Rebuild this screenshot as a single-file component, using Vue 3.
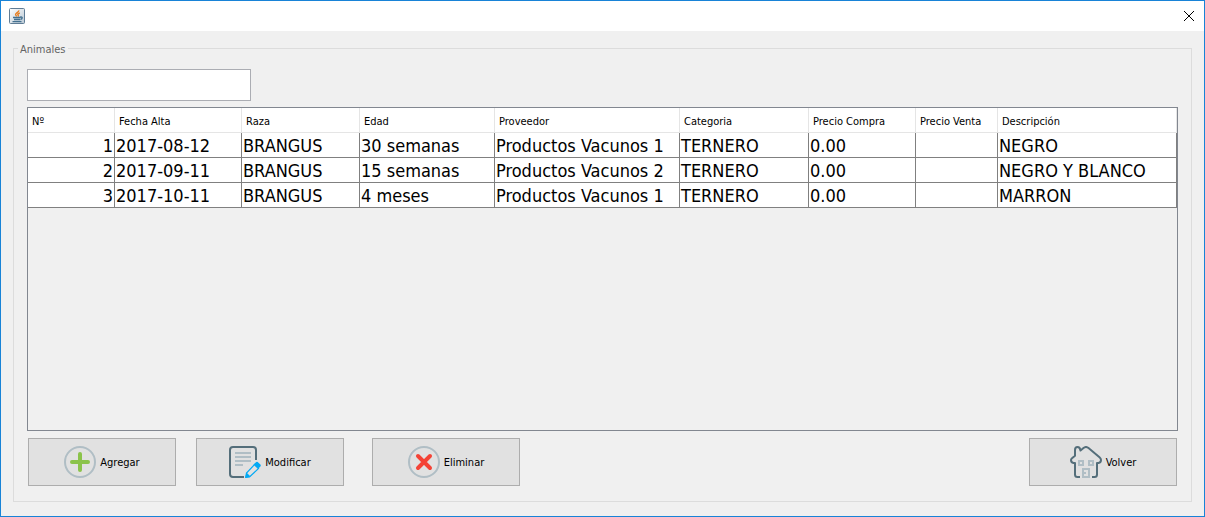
<script setup>
import { ref } from 'vue'

const search = ref('')
const columns = [
  { key: 'n', label: 'Nº' },
  { key: 'date', label: 'Fecha Alta' },
  { key: 'breed', label: 'Raza' },
  { key: 'age', label: 'Edad' },
  { key: 'supplier', label: 'Proveedor' },
  { key: 'category', label: 'Categoria' },
  { key: 'buy', label: 'Precio Compra' },
  { key: 'sell', label: 'Precio Venta' },
  { key: 'description', label: 'Descripción' }
]
const rows = [
  { n: 1, date: '2017-08-12', breed: 'BRANGUS', age: '30 semanas', supplier: 'Productos Vacunos 1', category: 'TERNERO', buy: '0.00', sell: '', description: 'NEGRO' },
  { n: 2, date: '2017-09-11', breed: 'BRANGUS', age: '15 semanas', supplier: 'Productos Vacunos 2', category: 'TERNERO', buy: '0.00', sell: '', description: 'NEGRO Y BLANCO' },
  { n: 3, date: '2017-10-11', breed: 'BRANGUS', age: '4 meses', supplier: 'Productos Vacunos 1', category: 'TERNERO', buy: '0.00', sell: '', description: 'MARRON' }
]
</script>

<template>
  <div class="window">
    <header class="titlebar">
      <svg class="app-icon" width="16" height="16" viewBox="0 0 16 16" aria-hidden="true">
        <defs>
          <linearGradient id="tile" x1="0" y1="0" x2="1" y2="1">
            <stop offset="0" stop-color="#ffffff" />
            <stop offset="1" stop-color="#b9c8d4" />
          </linearGradient>
        </defs>
        <rect x=".5" y=".5" width="15" height="15" rx="1" fill="url(#tile)" stroke="#5f7c95" />
        <path d="M9.8 2.4C10 4.4 6.2 4.8 6.600 6.600c.1.6.7 1.200 1.200 1.800M10.800 5C8.400 5.700 8.500 6.500 9.200 7.200c.4.5.1.9-.3 1.300" fill="none" stroke="#e87d1e" stroke-width="1.400" />
        <path d="M4 9.500h7M5 11.500h6M11 9.200c3-.8 2.700 1.700.4 2.300M3.500 13.600h9" fill="none" stroke="#44708f" stroke-width="1.400" />
      </svg>
      <button class="close" type="button" aria-label="Cerrar">
        <svg width="12" height="12" viewBox="0 0 12 12" aria-hidden="true">
          <path d="M1 1l10 10M11 1L1 11" fill="none" stroke="#000" stroke-width="1" />
        </svg>
      </button>
    </header>
    <main class="body">
      <fieldset class="group">
        <legend>Animales</legend>
        <input v-model="search" class="search" type="text" aria-label="Buscar" />
        <div class="pane">
          <table>
            <colgroup>
              <col v-for="c in columns" :key="c.key" :class="'col-' + c.key" />
            </colgroup>
            <thead>
              <tr>
                <th v-for="c in columns" :key="c.key" scope="col">{{ c.label }}</th>
              </tr>
            </thead>
            <tbody>
              <tr v-for="r in rows" :key="r.n">
                <td v-for="c in columns" :key="c.key" :class="{ number: c.key === 'n' }">{{ r[c.key] }}</td>
              </tr>
            </tbody>
          </table>
        </div>
        <div class="actions">
          <button class="action" type="button">
            <svg width="32" height="32" viewBox="0 0 32 32" aria-hidden="true">
              <circle cx="16" cy="16" r="15" fill="none" stroke="#b0bec5" stroke-width="2" />
              <path d="M16 8v16M8 16h16" fill="none" stroke="#8bc34a" stroke-width="4" stroke-linecap="round" />
            </svg>
            <span>Agregar</span>
          </button>
          <button class="action" type="button">
            <svg width="32" height="32" viewBox="0 0 32 32" aria-hidden="true">
              <path d="M27 14V4q0-3-3-3H4Q1 1 1 4v24q0 3 3 3h11" fill="none" stroke="#546e7a" stroke-width="2" />
              <path d="M6 7h16M6 11h16M6 15h16M6 19h8" fill="none" stroke="#b0bec5" stroke-width="2" />
              <path d="M25.500 18.500l4 4-9 8.500-3.700.4.700-4.400z" fill="#e1e1e1" stroke="#03a9f4" stroke-width="1.200" />
              <path d="M24.500 18.500l2.200-2.100q1-.9 2-.4l2.700 2.600q.8 1 0 2l-2.200 2.200zM17.500 26.500l4 4L16 32z" fill="#03a9f4" />
            </svg>
            <span>Modificar</span>
          </button>
          <button class="action remove" type="button">
            <svg width="32" height="32" viewBox="0 0 32 32" aria-hidden="true">
              <circle cx="16" cy="16" r="15" fill="none" stroke="#b0bec5" stroke-width="2" />
              <path d="M10 10l12 12M22 10L10 22" fill="none" stroke="#f44336" stroke-width="4" stroke-linecap="round" />
            </svg>
            <span>Eliminar</span>
          </button>
          <button class="action back" type="button">
            <svg width="32" height="32" viewBox="0 0 32 32" aria-hidden="true">
              <path d="M10 31H7.500Q5 31 5 28.500V17H3.500Q1 16.500 1 14q0-1 1-1.800L5 9.700V4q0-3 2.500-3T10.500 4.500L13.500 2q2.500-2 5 0l11 9.200Q31 12.500 31 14q0 2.500-2.500 3H27v11.500q0 2.500-2.500 2.500H22" fill="none" stroke="#546e7a" stroke-width="2" stroke-linejoin="round" />
              <path d="M9 15h4v4H9zM19 15h4v4h-4zM13 31v-8h6v8zM14 27h2" fill="none" stroke="#b0bec5" stroke-width="2" />
            </svg>
            <span>Volver</span>
          </button>
        </div>
      </fieldset>
    </main>
  </div>
</template>

<style>
body {
  margin: 0;
}
</style>

<style scoped>
.window {
  box-sizing: border-box;
  display: flex;
  flex-direction: column;
  min-height: 100vh;
  border: 1px solid #1883d7;
  background: #f0f0f0;
  color: #000;
  font: 11px/13px Tahoma, "DejaVu Sans Condensed", "DejaVu Sans", sans-serif;
}
.titlebar {
  display: flex;
  align-items: center;
  justify-content: space-between;
  height: 30px;
  padding: 0 9px 0 8px;
  box-sizing: border-box;
  background: #fff;
}
button {
  font: inherit;
  color: inherit;
}
.close {
  display: flex;
  padding: 0;
  border: 0;
  background: none;
}
.body {
  flex: 1;
  display: flex;
  padding: 10px 12px 14px;
}
.group {
  flex: 1;
  display: flex;
  flex-direction: column;
  min-width: 0;
  margin: 0;
  padding: 13px 13px 15px;
  border: 1px solid #dcdcdc;
}
legend {
  margin-left: -9px;
  padding: 2px 2px 0;
  color: #646464;
}
.search {
  box-sizing: border-box;
  width: 224px;
  height: 32px;
  padding: 0 4px;
  border: 1px solid #abadb3;
  border-radius: 0;
  background: #fff;
  font: inherit;
  outline: none;
}
.pane {
  flex: 1;
  margin: 6px 0 7px;
  border: 1px solid #828790;
}
table {
  width: 100%;
  table-layout: fixed;
  border-collapse: separate;
  border-spacing: 0;
  background: #fff;
}
.col-n { width: 87px; }
.col-date { width: 127px; }
.col-breed { width: 118px; }
.col-age { width: 135px; }
.col-supplier { width: 185px; }
.col-category { width: 129px; }
.col-buy { width: 107px; }
.col-sell { width: 82px; }
th {
  box-sizing: border-box;
  height: 25px;
  padding: 2px 4px 0;
  border-right: 1px solid #e5e5e5;
  border-bottom: 1px solid #e5e5e5;
  font-weight: normal;
  text-align: left;
  white-space: nowrap;
}
td {
  box-sizing: border-box;
  height: 25px;
  padding: 2px 1px 0;
  border-right: 1px solid #808080;
  border-bottom: 1px solid #808080;
  font-size: 18px;
  line-height: 22px;
  white-space: nowrap;
}
.number {
  text-align: right;
}
.actions {
  display: flex;
  margin: 0 1px;
}
.action {
  display: flex;
  align-items: center;
  justify-content: center;
  gap: 4px;
  width: 148px;
  height: 48px;
  margin-right: 20px;
  padding: 0;
  border: 1px solid #adadad;
  background: #e1e1e1;
}
.remove {
  margin-left: 8px;
}
.back {
  margin-left: auto;
  margin-right: 0;
}
</style>
